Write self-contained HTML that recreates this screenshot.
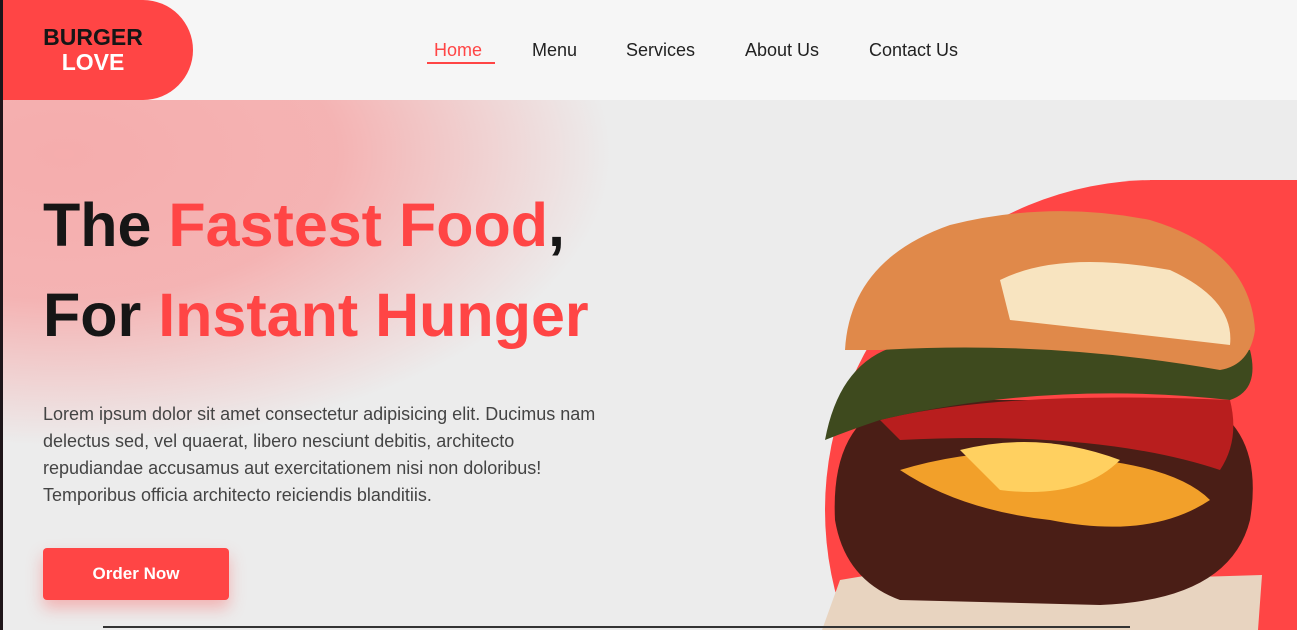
<!DOCTYPE html>
<html><head><meta charset="utf-8"><style>
*{margin:0;padding:0;box-sizing:border-box}
html,body{width:1297px;height:630px;overflow:hidden}
body{background:#ececec;font-family:"Liberation Sans",sans-serif;position:relative}
.strip{position:absolute;left:0;top:0;width:3px;height:630px;background:#1e1519;z-index:5}
header{position:absolute;left:0;top:0;width:1297px;height:100px;background:#f6f6f6;z-index:2}
.logo{position:absolute;left:3px;top:0;width:190px;height:100px;background:#ff4545;border-radius:0 50px 50px 0;text-align:center;font-weight:bold;font-size:23px;line-height:25px;padding-top:25px;padding-right:10px}
.logo .a{color:#161616}.logo .b{color:#fff}
nav{position:absolute;top:40px;left:0;font-size:18px;color:#222}
nav span{position:absolute;white-space:nowrap}
.glow{position:absolute;left:0;top:100px;width:640px;height:360px;background:radial-gradient(ellipse 95% 90% at 10% 15%,rgba(255,110,110,.5) 0%,rgba(255,110,110,.45) 45%,rgba(236,236,236,0) 90%)}
h1{position:absolute;left:43px;font-size:61px;font-weight:bold;color:#161616;letter-spacing:0}
h1 em{font-style:normal;color:#ff4545}
p{position:absolute;left:43px;top:401px;width:575px;font-size:18px;line-height:27px;color:#444}
.btn{position:absolute;left:43px;top:548px;width:186px;height:52px;background:#ff4545;border-radius:4px;color:#fff;font-weight:bold;font-size:17px;text-align:center;line-height:52px;box-shadow:0 8px 16px rgba(255,69,69,.35)}
.line{position:absolute;left:103px;top:626px;width:1027px;height:2px;background:#333}
svg{position:absolute;left:0;top:0}
</style></head><body>
<div class="strip"></div>
<div class="glow"></div>
<header>
<div class="logo"><div class="a">BURGER</div><div class="b">LOVE</div></div>
<nav>
<span style="left:434px;color:#ff4545">Home</span>
<span style="left:427px;top:22px;width:68px;height:2px;background:#ff4545"></span>
<span style="left:532px">Menu</span>
<span style="left:626px">Services</span>
<span style="left:745px">About Us</span>
<span style="left:869px">Contact Us</span>
</nav>
</header>
<h1 style="top:190px">The <em>Fastest Food</em>,</h1>
<h1 style="top:280px">For <em>Instant Hunger</em></h1>
<p>Lorem ipsum dolor sit amet consectetur adipisicing elit. Ducimus nam delectus sed, vel quaerat, libero nesciunt debitis, architecto repudiandae accusamus aut exercitationem nisi non doloribus! Temporibus officia architecto reiciendis blanditiis.</p>
<div class="btn">Order Now</div>
<svg width="1297" height="630">
<defs><clipPath id="c"><rect x="0" y="180" width="1297" height="450"/></clipPath></defs>
<circle cx="1155" cy="510" r="330" fill="#ff4545" clip-path="url(#c)"/>
<rect x="1150" y="180" width="147" height="450" fill="#ff4545"/>
<path d="M822 630 L840 580 L900 570 L1100 580 L1262 575 L1258 630Z" fill="#e8d4c0"/>
<path d="M835 520 Q830 420 900 400 L1200 400 Q1265 430 1250 520 Q1230 600 1100 605 L900 600 Q845 580 835 520Z" fill="#4a1e16"/>
<path d="M900 470 Q1000 440 1100 460 Q1180 470 1210 500 Q1150 540 1050 520 Q960 510 900 470Z" fill="#f2a02a"/>
<path d="M960 450 Q1040 430 1120 460 Q1080 500 1000 490Z" fill="#ffd060"/>
<path d="M880 420 Q1000 390 1230 400 Q1240 440 1220 470 Q1100 430 900 440Z" fill="#b81e1e"/>
<path d="M825 440 Q840 360 900 345 Q1050 330 1250 350 Q1260 390 1230 400 Q1050 380 880 420 Q850 430 825 440Z" fill="#3e4a1e"/>
<path d="M845 350 Q850 260 950 225 Q1050 200 1150 220 Q1250 250 1255 330 Q1250 365 1220 370 Q1050 340 880 350Z" fill="#e0894a"/>
<path d="M1000 280 Q1060 250 1170 270 Q1235 300 1230 345 Q1100 330 1010 320Z" fill="#f8e4c0"/>
</svg>
<div class="line"></div>
</body></html>
